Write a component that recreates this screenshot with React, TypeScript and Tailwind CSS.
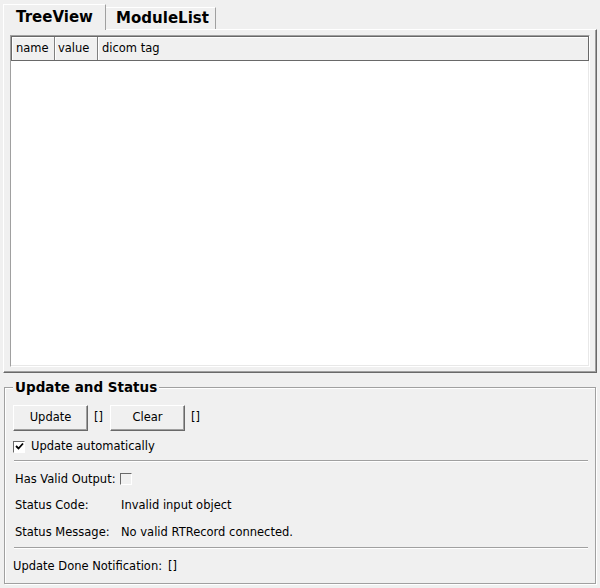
import React from "react";

const font = { fontFamily: "Tahoma, 'DejaVu Sans', 'Liberation Sans', sans-serif" };

function Btn({ label }: { label: string }) {
  return (
    <div className="flex h-[26px] w-[75px] items-center justify-center border border-t-white border-l-white border-r-[#696969] border-b-[#696969] bg-[#f0f0f0] text-[11.5px] text-black shadow-[inset_-1px_-1px_0_#a0a0a0]">
      {label}
    </div>
  );
}

export default function App() {
  return (
    <div
      className="relative h-[588px] w-[600px] overflow-hidden bg-[#f0f0f0] text-[11.5px] text-black"
      style={font}
    >
      {/* Tabs */}
      <div className="flex h-[29px] items-end pl-[3px] pt-[4px]">
        <div className="relative z-10 -mb-[1px] flex h-[26px] w-[103px] items-center justify-center border-l border-t border-r border-l-white border-t-white border-r-[#a0a0a0] bg-[#f0f0f0] text-[15px] font-bold">
          TreeView
        </div>
        <div className="flex h-[22px] w-[110px] items-center justify-center border-t border-r border-t-white border-r-[#a0a0a0] bg-[#f0f0f0] pl-[4px] text-[15px] font-bold">
          ModuleList
        </div>
      </div>
      {/* Pane */}
      <div className="mx-[3px] h-[344px] w-[594px] border border-t-white border-l-white border-r-[#696969] border-b-[#696969] p-[6px] pt-[5px] shadow-[inset_-1px_-1px_0_#a0a0a0]">
        <div className="flex h-[332px] w-[580px] flex-col border border-t-[#a0a0a0] border-l-[#a0a0a0] border-r-white border-b-white bg-white">
          <div className="flex h-[25px] border border-[#696969] bg-[#f0f0f0]">
            <div className="flex w-[43px] items-center border-r border-[#808080] pl-[4px] shadow-[inset_1px_1px_0_white]">name</div>
            <div className="flex w-[43px] items-center border-r border-[#808080] pl-[3px] shadow-[inset_1px_1px_0_white]">value</div>
            <div className="flex flex-1 items-center pl-[4px] shadow-[inset_1px_1px_0_white]">dicom tag</div>
          </div>
          <div className="flex-1 border-r border-b border-[#e8e8e8]" />
        </div>
      </div>
      {/* Group box */}
      <div className="relative mx-[4px] mt-[14px] h-[197px] w-[592px] border border-[#a0a0a0] px-[8px] pt-[17px] shadow-[inset_1px_1px_0_white,1px_1px_0_white]">
        <div className="absolute -top-[11px] left-[8px] bg-[#f0f0f0] px-[2px] text-[13.5px] font-bold leading-[20px]">
          Update and Status
        </div>
        <div className="flex items-center">
          <Btn label="Update" />
          <span className="ml-[6px] w-[16px]">[]</span>
          <Btn label="Clear" />
          <span className="ml-[6px]">[]</span>
        </div>
        <div className="mt-[7px] flex items-center">
          <div className="flex h-[12px] w-[12px] items-center justify-center border border-t-[#696969] border-l-[#696969] border-r-white border-b-white bg-white">
            <svg width="9" height="9" viewBox="0 0 9 9">
              <path d="M1 4 L3.5 6.5 L8 1.5" stroke="black" strokeWidth="1.8" fill="none" />
            </svg>
          </div>
          <span className="ml-[6px]">Update automatically</span>
        </div>
        <div className="mx-[1px] mt-[5px] h-[2px] w-[574px] border-t border-b border-t-[#a0a0a0] border-b-white" />
        <div className="ml-[2px] mt-[7px] flex h-[20px] items-center">
          <span>Has Valid Output:</span>
          <div className="ml-[4px] h-[12px] w-[12px] border border-t-[#696969] border-l-[#696969] border-r-white border-b-white" />
        </div>
        <div className="ml-[2px] mt-[6px] flex h-[20px] items-center">
          <span className="w-[106px]">Status Code:</span>
          <span>Invalid input object</span>
        </div>
        <div className="ml-[2px] mt-[7px] flex h-[20px] items-center">
          <span className="w-[106px]">Status Message:</span>
          <span>No valid RTRecord connected.</span>
        </div>
        <div className="mx-[1px] mt-[5px] h-[2px] w-[574px] border-t border-b border-t-[#a0a0a0] border-b-white" />
        <div className="mt-[7px] flex h-[20px] items-center">
          <span>Update Done Notification:</span>
          <span className="ml-[6px]">[]</span>
        </div>
      </div>
    </div>
  );
}
